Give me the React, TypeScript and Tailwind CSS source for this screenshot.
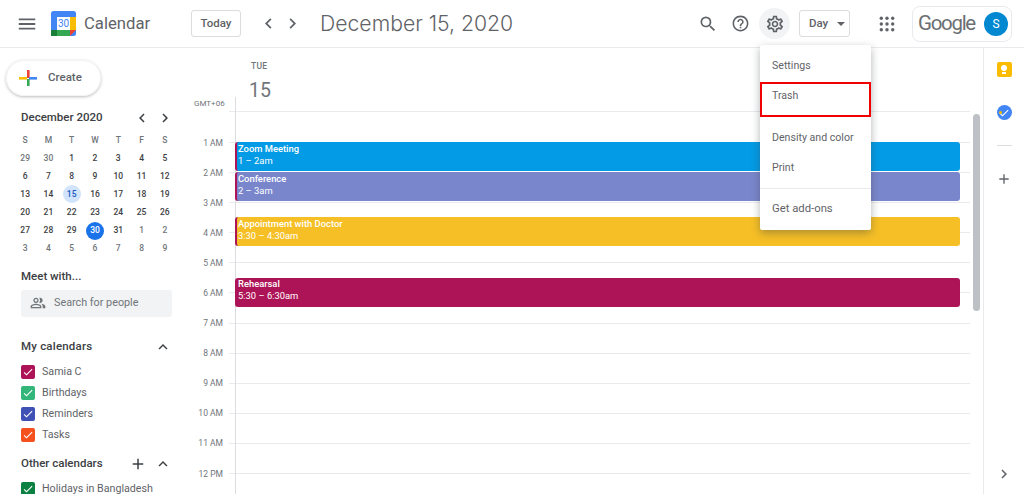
import {
  MdAdd,
  MdCheck,
  MdChevronLeft,
  MdChevronRight,
  MdExpandLess,
  MdHelpOutline,
  MdMenu,
  MdOutlinePeopleAlt,
  MdOutlineSettings,
  MdSearch,
} from 'react-icons/md';

const hours = ['1 AM', '2 AM', '3 AM', '4 AM', '5 AM', '6 AM', '7 AM', '8 AM', '9 AM', '10 AM', '11 AM', '12 PM'];

const weeks = [
  ['29', '30', '1', '2', '3', '4', '5'],
  ['6', '7', '8', '9', '10', '11', '12'],
  ['13', '14', '15', '16', '17', '18', '19'],
  ['20', '21', '22', '23', '24', '25', '26'],
  ['27', '28', '29', '30', '31', '1', '2'],
  ['3', '4', '5', '6', '7', '8', '9'],
];

const calendars = [
  { name: 'Samia C', color: 'bg-[#ad1457]' },
  { name: 'Birthdays', color: 'bg-[#33b679]' },
  { name: 'Reminders', color: 'bg-[#3f51b5]' },
  { name: 'Tasks', color: 'bg-[#f4511e]' },
];

const events = [
  { title: 'Zoom Meeting', time: '1 – 2am', pos: 'top-[30px]', color: 'bg-[#039be5]', bar: true },
  { title: 'Conference', time: '2 – 3am', pos: 'top-[60px]', color: 'bg-[#7986cb]', bar: true },
  { title: 'Appointment with Doctor', time: '3:30 – 4:30am', pos: 'top-[105px]', color: 'bg-[#f6bf26]', bar: true },
  { title: 'Rehearsal', time: '5:30 – 6:30am', pos: 'top-[165.5px]', color: 'bg-[#ad1457]', bar: false },
];

function CalCheck({ color, name }: { color: string; name: string }) {
  return (
    <div className="flex h-[21px] items-center">
      <span className={`flex h-[14px] w-[14px] items-center justify-center rounded-[2px] ${color}`}>
        <MdCheck size={12} className="text-white" />
      </span>
      <span className="ml-[7px] text-[10.7px] text-[#5f6368]">{name}</span>
    </div>
  );
}

function CalendarLogo() {
  return (
    <svg width="25" height="25" viewBox="0 0 25 25">
      <rect x="0" y="0" width="25" height="25" rx="2.5" fill="#4285f4" />
      <rect x="0" y="19" width="6" height="6" fill="#188038" />
      <rect x="6" y="19" width="13" height="6" fill="#34a853" />
      <rect x="19" y="6" width="6" height="13" fill="#fbbc04" />
      <path d="M19 19h6l-6 6z" fill="#ea4335" />
      <rect x="6" y="6" width="13" height="13" fill="#fff" />
      <text x="12.5" y="16" textAnchor="middle" fontSize="10" fontFamily="Roboto, sans-serif" fill="#4285f4">30</text>
    </svg>
  );
}

function Header() {
  return (
    <header className="flex h-[48px] shrink-0 items-center border-b border-[#e8eaed] text-[#5f6368]">
      <MdMenu size={22} className="ml-[16px]" />
      <div className="ml-[13px]">
        <CalendarLogo />
      </div>
      <span className="ml-[8px] w-[107px] text-[16.7px]">Calendar</span>
      <button type="button" className="flex h-[27px] w-[50px] items-center justify-center rounded-[3px] border border-[#dadce0] text-[11.5px] font-medium">
        Today
      </button>
      <MdChevronLeft size={21} className="ml-[17px]" />
      <MdChevronRight size={21} className="ml-[3px]" />
      <span className="ml-[17px] font-['Inter',sans-serif] text-[21.2px] font-light">December 15, 2020</span>
      <div className="flex-1" />
      <MdSearch size={20} />
      <MdHelpOutline size={19} className="ml-[13px]" />
      <div className="ml-[9px] flex h-[31px] w-[31px] items-center justify-center rounded-full bg-[#f1f3f4]">
        <MdOutlineSettings size={20} />
      </div>
      <button type="button" className="ml-[9px] flex h-[27px] w-[51px] items-center rounded-[3px] border border-[#dadce0] pl-[9px] text-[11.5px] font-medium">
        Day
        <span className="ml-[9px] h-0 w-0 border-x-[4px] border-t-[4px] border-x-transparent border-t-[#5f6368]" />
      </button>
      <svg width="18" height="18" viewBox="0 0 18 18" fill="currentColor" className="ml-[28px]">
        {[3.3, 9, 14.7].map((y) =>
          [3.3, 9, 14.7].map((x) => <circle key={`${x}-${y}`} cx={x} cy={y} r="1.7" />),
        )}
      </svg>
      <div className="ml-[16px] mr-[12px] flex h-[36px] w-[100px] items-center rounded-[8px] border border-[#e8eaed] pl-[5px]">
        <span className="text-[20.5px] tracking-[-1.3px] text-[#6b6f73]">Google</span>
        <span className="ml-auto mr-[3px] flex h-[24px] w-[24px] items-center justify-center rounded-full bg-[#0288d1] text-[12px] text-white">S</span>
      </div>
    </header>
  );
}

function Sidebar() {
  return (
    <aside className="w-[190px] shrink-0 overflow-hidden text-[#3c4043]">
      <div className="ml-[6px] mt-[12px] flex h-[36px] w-[95px] items-center rounded-full border border-[#f1f3f4] shadow-[0_1px_3px_rgba(60,64,67,0.35)]">
        <svg width="20" height="20" viewBox="0 0 20 20" className="ml-[11px]">
          <rect x="9" y="2" width="2.6" height="8" fill="#ea4335" />
          <rect x="11" y="9" width="8" height="2.6" fill="#4285f4" />
          <rect x="9" y="11" width="2.6" height="7" fill="#34a853" />
          <rect x="1" y="9" width="8" height="2.6" fill="#fbbc04" />
        </svg>
        <span className="ml-[10px] text-[11.5px] font-medium text-[#5f6368]">Create</span>
      </div>

      <div className="ml-[21px] mt-[13px] flex w-[152px] items-center">
        <span className="text-[11.5px] font-medium">December 2020</span>
        <MdChevronLeft size={18} className="ml-auto" />
        <MdChevronRight size={18} className="ml-[5px] mr-[-1px]" />
      </div>

      <div className="ml-[13.5px] mt-[4px] grid w-[163px] grid-cols-7 text-center text-[8.5px] font-medium">
        {['S', 'M', 'T', 'W', 'T', 'F', 'S'].map((d, i) => (
          <span key={i} className="flex h-[18.1px] items-center justify-center text-[#70757a]">{d}</span>
        ))}
        {weeks.map((week, w) =>
          week.map((d, i) => {
            const other = (w === 0 && i < 2) || (w === 4 && i > 4) || w === 5;
            const sel = w === 2 && i === 2;
            const today = w === 4 && i === 3;
            return (
              <span key={`${w}-${i}`} className="flex h-[18.1px] items-center justify-center">
                <span
                  className={`flex h-[18px] w-[18px] items-center justify-center rounded-full ${
                    today ? 'bg-[#1a73e8] text-white' : sel ? 'bg-[#d2e3fc] text-[#185abc]' : other ? 'text-[#70757a]' : 'text-[#3c4043]'
                  }`}
                >
                  {d}
                </span>
              </span>
            );
          }),
        )}
      </div>

      <div className="ml-[21px] mt-[10px] text-[11.5px] font-medium">Meet with...</div>
      <div className="ml-[21px] mt-[5px] flex h-[27px] w-[151px] items-center rounded-[3px] bg-[#f1f3f4] pl-[9px] text-[#70757a]">
        <MdOutlinePeopleAlt size={16} />
        <span className="ml-[8px] text-[10.8px]">Search for people</span>
      </div>

      <div className="ml-[21px] mt-[21px] flex w-[150px] items-center">
        <span className="text-[11.5px] font-medium tracking-[0.2px]">My calendars</span>
        <MdExpandLess size={18} className="ml-auto mr-[-1px]" />
      </div>
      <div className="ml-[21px] mt-[6px]">
        {calendars.map((c) => (
          <CalCheck key={c.name} color={c.color} name={c.name} />
        ))}
      </div>

      <div className="ml-[21px] mt-[9px] flex w-[150px] items-center">
        <span className="text-[11.5px] font-medium">Other calendars</span>
        <MdAdd size={18} className="ml-auto" />
        <MdExpandLess size={18} className="ml-[7px] mr-[-1px]" />
      </div>
      <div className="ml-[21px] mt-[6px]">
        <CalCheck color="bg-[#0b8043]" name="Holidays in Bangladesh" />
      </div>
    </aside>
  );
}

function DayView() {
  return (
    <main className="relative min-w-0 flex-1 overflow-hidden">
      <div className="flex h-[63px]">
        <div className="relative w-[45px] shrink-0">
          <span className="absolute bottom-[1px] left-[4px] text-[8px] text-[#70757a]">GMT+06</span>
        </div>
        <div className="flex flex-col pl-[16px] text-[#70757a]">
          <span className="mt-[12px] text-[8.5px] font-medium tracking-[0.2px]">TUE</span>
          <span className="ml-[-2px] mt-[5px] text-[19.5px] leading-[26px]">15</span>
        </div>
      </div>
      <div className="ml-[39px] mr-[13px] h-px bg-[#e8eaed]" />
      <div className="relative">
        <div className="absolute bottom-0 left-[45px] top-[-15px] w-px bg-[#dadce0]" />
        <div className="h-[30px]" />
        {hours.map((h) => (
          <div key={h} className="flex h-[30.1px] items-start">
            <span className="mt-[-5.5px] w-[33px] text-right text-[8.5px] leading-[12px] text-[#70757a]">{h}</span>
            <span className="ml-[6px] h-px w-[741px] bg-[#e8eaed]" />
          </div>
        ))}
        {events.map((e) => (
          <div key={e.title} className={`absolute left-[45px] h-[29px] w-[725px] overflow-hidden rounded-[3px] ${e.pos} ${e.color} ${e.bar ? 'border-l-[2.5px] border-[#ad1457] pl-[1px]' : 'pl-[3px]'} text-[9.4px] leading-[12px] text-white`}>
            <div className="mt-[0.5px] font-medium">{e.title}</div>
            <div>{e.time}</div>
          </div>
        ))}
      </div>
      <div className="absolute right-[3px] top-[66px] h-[197px] w-[7px] rounded-full bg-[#bdc1c6]" />
    </main>
  );
}

function RightRail() {
  return (
    <aside className="flex w-[41px] shrink-0 flex-col items-center border-l border-[#e8eaed] text-[#5f6368]">
      <div className="mt-[14px] flex h-[15px] w-[15px] flex-col items-center justify-center rounded-[2px] bg-[#fbbc04]">
        <span className="h-[6px] w-[6px] rounded-full bg-white" />
        <span className="mt-[1px] h-[1.5px] w-[4px] bg-white" />
      </div>
      <div className="relative mt-[28px] flex h-[15px] w-[15px] items-center justify-center rounded-full bg-[#4285f4]">
        <MdCheck size={12} className="text-white" />
        <span className="absolute left-[2px] top-[6px] h-[3px] w-[3px] rounded-full bg-[#fbbc04]" />
      </div>
      <div className="mt-[25px] h-px w-[15px] bg-[#dadce0]" />
      <MdAdd size={16} className="mt-[25px]" />
      <MdChevronRight size={18} className="mb-[11px] mt-auto" />
    </aside>
  );
}

function SettingsMenu() {
  return (
    <div className="absolute left-[760px] top-[45px] w-[111px] rounded-[2px] bg-white text-[10.6px] text-[#5f6368] shadow-[0_3px_9px_rgba(60,64,67,0.4)]">
      <div className="flex h-[37px] items-center pl-[12px] pt-[5px]">Settings</div>
      <div className="h-[35px] border-2 border-[#f00000] pl-[10px] pt-[4px]">Trash</div>
      <div className="mt-[3px] flex h-[35px] items-center pl-[12px]">Density and color</div>
      <div className="flex h-[25px] items-center pl-[12px]">Print</div>
      <div className="mt-[8px] h-px bg-[#e8eaed]" />
      <div className="flex h-[41px] items-center pl-[12px] text-[11.3px]">Get add-ons</div>
    </div>
  );
}

export default function App() {
  return (
    <div className="relative flex h-[494px] w-[1024px] flex-col overflow-hidden bg-white font-['Roboto',sans-serif]">
      <Header />
      <div className="flex min-h-0 flex-1">
        <Sidebar />
        <DayView />
        <RightRail />
      </div>
      <SettingsMenu />
    </div>
  );
}
